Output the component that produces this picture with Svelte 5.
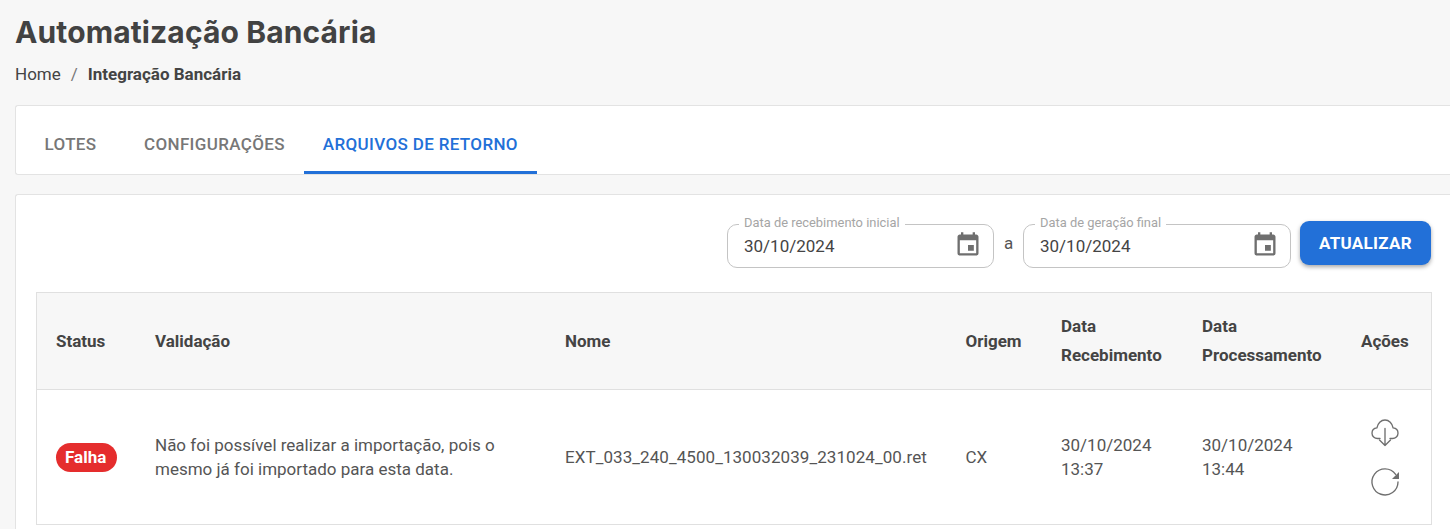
<script>
  const columns = [99.5, 410, 400.5, 95.5, 141, 159, 89];
  const fields = [
    { label: 'Data de recebimento inicial', value: '30/10/2024' },
    { label: 'Data de geração final', value: '30/10/2024' }
  ];
  const tabs = ['LOTES', 'CONFIGURAÇÕES', 'ARQUIVOS DE RETORNO'];
</script>

{#snippet calendar()}
  <svg class="cal" viewBox="0 0 24 24" width="28" height="28">
    <path d="M17 12h-5v5h5v-5zM16 1v2H8V1H6v2H5c-1.11 0-1.99.9-1.99 2L3 19c0 1.1.89 2 2 2h14c1.1 0 2-.9 2-2V5c0-1.1-.9-2-2-2h-1V1h-2zm3 18H5V8h14v11z" fill="#6f6f6f" />
  </svg>
{/snippet}

<main>
  <h1>Automatização Bancária</h1>
  <nav class="crumbs">
    <span>Home</span>
    <span class="sep">/</span>
    <b>Integração Bancária</b>
  </nav>

  <section class="card tabs">
    {#each tabs as tab, i}
      <button class:active={i === 2}>{tab}</button>
    {/each}
  </section>

  <section class="card body">
    <div class="filters">
      {#each fields as field, i}
        {#if i > 0}<span class="a">a</span>{/if}
        <fieldset>
          <legend>{field.label}</legend>
          <span class="value">{field.value}</span>
          {@render calendar()}
        </fieldset>
      {/each}
      <button class="update">ATUALIZAR</button>
    </div>

    <table>
      <colgroup>
        {#each columns as w}<col style:width="{w}px" />{/each}
      </colgroup>
      <thead>
        <tr>
          <th>Status</th>
          <th>Validação</th>
          <th>Nome</th>
          <th>Origem</th>
          <th>Data Recebimento</th>
          <th>Data Processamento</th>
          <th>Ações</th>
        </tr>
      </thead>
      <tbody>
        <tr>
          <td><span class="badge">Falha</span></td>
          <td>Não foi possível realizar a importação, pois o mesmo já foi importado para esta data.</td>
          <td class="file">EXT_033_240_4500_130032039_231024_00.ret</td>
          <td>CX</td>
          <td>30/10/2024 13:37</td>
          <td>30/10/2024 13:44</td>
          <td class="actions">
            <svg viewBox="0 0 28 28" width="28" height="28" fill="none" stroke="#6f6f6f" stroke-width="1.35" stroke-linecap="round" stroke-linejoin="round">
              <path d="M9 19.500H6.500C3.500 19.500 1 17.200 1 14.200c0-2.800 2.100-5 4.900-5.300C6.700 4.500 10 1 14 1s7.300 3.500 8.100 7.900c2.800.3 4.900 2.500 4.900 5.300 0 3-2.500 5.300-5.500 5.300H19" />
              <path d="M14 9.500v17M8.500 21 14 26.500l5.500-5.500" />
            </svg>
            <svg viewBox="0 0 28 28" width="28" height="28" fill="none" stroke="#6f6f6f" stroke-width="1.35">
              <path d="M24.600 6.400A13 13 0 1 0 27 14" stroke-linecap="round" />
              <path d="M28 4v7h-7z" fill="#6f6f6f" stroke="none" />
            </svg>
          </td>
        </tr>
      </tbody>
    </table>
  </section>
</main>

<style>
  :global(body) {
    background: #f7f7f7;
    overflow: hidden;
  }
  main {
    height: 529px;
    box-sizing: border-box;
    padding: 13px 0 0 15px;
    font-family: Roboto, sans-serif;
    color: #444;
    overflow: hidden;
  }
  h1 {
    margin: 0;
    font-family: Inter, sans-serif;
    font-size: 30px;
    line-height: 38px;
    font-weight: 700;
    letter-spacing: 0.12px;
    color: #424242;
  }
  .crumbs {
    margin-top: 12px;
    height: 22px;
    display: flex;
    align-items: center;
    font-size: 17px;
  }
  .crumbs b {
    font-weight: 700;
  }
  .sep {
    margin: 0 10px;
    color: #777;
  }
  .card {
    background: #fff;
    border: 1px solid #e3e3e3;
    border-right: 0;
    border-radius: 3px 0 0 3px;
  }
  .tabs {
    margin-top: 20px;
    height: 68px;
    display: flex;
  }
  .tabs button {
    height: 68px;
    padding: 11px 19px 0;
    border: 0;
    background: none;
    font: 500 17px Roboto, sans-serif;
    letter-spacing: 0.35px;
    color: #777;
    box-sizing: border-box;
    border-bottom: 3px solid transparent;
  }
  .tabs button:first-child {
    padding: 11px 28.5px 0 28.5px;
  }
  .tabs button.active {
    color: #2270d8;
    border-bottom-color: #2270d8;
  }
  .body {
    margin-top: 19px;
    padding: 26px 19px 0 20px;
    height: 340px;
  }
  .filters {
    display: flex;
    align-items: flex-start;
    justify-content: flex-end;
    height: 71px;
  }
  fieldset {
    margin: -5px 0 0;
    width: 267px;
    height: 52px;
    box-sizing: border-box;
    border: 1px solid #c4c4c4;
    border-radius: 10px;
    padding: 0 11px 0 16px;
    display: flex;
    align-items: center;
    justify-content: space-between;
    min-width: 0;
  }
  fieldset:last-of-type {
    width: 268px;
  }
  legend {
    padding: 0 5px 4px;
    margin-left: -5px;
    font-size: 12.9px;
    line-height: 13px;
    color: #a5a5a5;
  }
  .value {
    font-size: 17px;
    color: #444;
    margin-top: -8px;
  }
  .cal {
    margin-top: -10px;
  }
  .a {
    width: 29px;
    text-align: center;
    font-size: 17px;
    color: #555;
    line-height: 44px;
  }
  .update {
    margin: 0 0 0 9px;
    width: 131px;
    height: 44px;
    border: 0;
    border-radius: 9px;
    background: #2270d8;
    color: #fff;
    font: 700 17px Roboto, sans-serif;
    letter-spacing: 0.3px;
    box-shadow: 0 2px 4px rgba(0, 0, 0, 0.35);
  }
  table {
    width: 1395px;
    table-layout: fixed;
    border-collapse: collapse;
    border: 1px solid #e0e0e0;
    font-size: 17px;
  }
  th, td {
    padding: 0 10px 0 19px;
    text-align: left;
    line-height: 29px;
  }
  th {
    height: 96px;
    background: #f7f7f7;
    font-weight: 700;
    color: #444;
    border-bottom: 1px solid #e0e0e0;
  }
  td {
    height: 134px;
    line-height: 24px;
    color: #555;
    border-bottom: 1px solid #e0e0e0;
    vertical-align: middle;
  }
  .file {
    letter-spacing: 0.07px;
  }
  .badge {
    display: inline-block;
    padding: 0 10.5px 0 9px;
    height: 29px;
    line-height: 29px;
    border-radius: 15px;
    background: #e52d2d;
    color: #fff;
    font-weight: 700;
  }
  .actions svg {
    display: block;
    overflow: visible;
    margin: 0 0 21px 10px;
  }
  .actions svg:last-child {
    margin-bottom: 0;
  }
</style>
